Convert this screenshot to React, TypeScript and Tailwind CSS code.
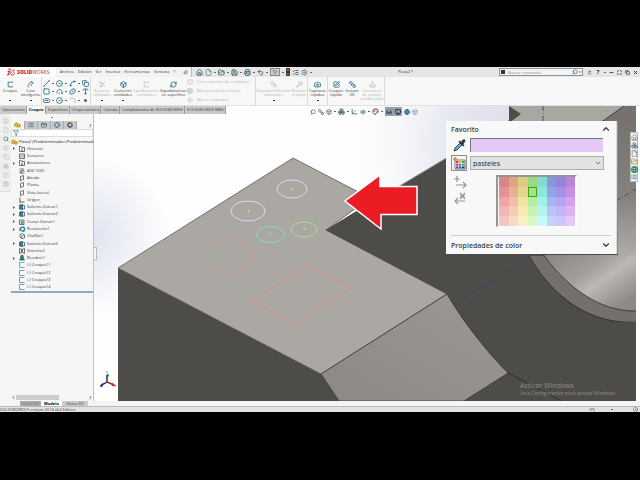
import React, { useState } from 'react';
import {
  Home, File, FolderOpen, Save, Printer, Undo2, MousePointer2, ListChecks, Settings, Pin, Search, User,
  Square, Spline, Grid3x3, CircleDot, Type, Scissors, RefreshCw, Copy, Wrench, Camera,
  SquarePen, Boxes, Box, Eye, ChevronDown, ChevronUp, ChevronLeft, ChevronRight, Filter, Crosshair, List,
  SquareStack, Glasses, Ruler, FlipHorizontal, Move, Minus, Copy as Restore, X, Maximize, Monitor, Axis3d,
  FolderClosed, Globe, Palette, Cone,
} from 'lucide-react';

type IconType = React.ComponentType<{ size?: number; strokeWidth?: number; className?: string }>;

interface ToolProps {
  icon: IconType;
  lines: string[];
  className: string;
  disabled?: boolean;
  menu?: boolean;
}

const MENUS = ['Archivo', 'Edición', 'Ver', 'Insertar', 'Herramientas', 'Ventana', '?'];
const QUICK: IconType[] = [FolderOpen, Save, Printer, Undo2];
const TABS = ['Operaciones', 'Croquis', 'Superficies', 'Chapa metálica', 'Calcular', 'Complementos de SOLIDWORKS', 'SOLIDWORKS MBD'];

const TREE: { label: string; kind: string; arrow?: boolean }[] = [
  { label: 'Historial', kind: 'folder', arrow: true },
  { label: 'Sensores', kind: 'sensor' },
  { label: 'Anotaciones', kind: 'folder', arrow: true },
  { label: 'AISI 1020', kind: 'material' },
  { label: 'Alzado', kind: 'plane' },
  { label: 'Planta', kind: 'plane' },
  { label: 'Vista lateral', kind: 'plane' },
  { label: 'Origen', kind: 'origin' },
  { label: 'Saliente-Extruir1', kind: 'boss', arrow: true },
  { label: 'Saliente-Extruir2', kind: 'boss', arrow: true },
  { label: 'Cortar-Extruir1', kind: 'cut', arrow: true },
  { label: 'Revolución1', kind: 'revolve', arrow: true },
  { label: 'Chaflán1', kind: 'chamfer' },
  { label: 'Saliente-Extruir5', kind: 'boss', arrow: true },
  { label: 'Simetría2', kind: 'mirror' },
  { label: 'Recubrir1', kind: 'loft', arrow: true },
  { label: '(-) Croquis11', kind: 'sketch' },
  { label: '(-) Croquis12', kind: 'sketch' },
  { label: '(-) Croquis13', kind: 'sketch' },
  { label: '(-) Croquis14', kind: 'sketch' },
];

const PASTELS = [
  '#dc8585', '#dfa486', '#dccb83', '#9bd981', '#80dcd2', '#8797dc', '#9585dc', '#bf83dc',
  '#e39391', '#e7b193', '#e6d58e', '#a8df8c', '#8fe5dc', '#93a4e4', '#a392e2', '#c98fe4',
  '#efa5a3', '#f1bea5', '#f0e2a0', '#b8ec9e', '#a0f0e8', '#a5b5f1', '#b5a5f1', '#d6a2f0',
  '#f4b5b5', '#f5cbb6', '#f5ebb2', '#c7f3b1', '#b2f5ee', '#b6c4f7', '#c4b6f6', '#deb3f6',
  '#f8c5c6', '#f9d8c7', '#f9f1c4', '#d5f8c4', '#c4f9f4', '#c5d1fb', '#d0c5fa', '#e6c5fa',
];

const Logo = () => (
  <div className="flex h-full w-14 shrink-0 items-center gap-px bg-white pl-1.5 text-[#c9252f]">
    <svg viewBox="0 0 24 22" className="h-2 w-2.5" fill="none" stroke="currentColor" strokeWidth="2.6" strokeLinecap="round">
      <path d="M5 3c5-2 9 0 6 3-2 2-4 3-7 4M3 19c7-1 11-6 8-8-2-1-5-1-7-1M3 19l4-8" />
      <path d="M22 6c-4-1-7 1-5 4 2 2 5 3 4 6-1 3-4 4-8 3" />
    </svg>
    <span className="text-[5px] leading-none font-extrabold">SOLID<span className="font-medium">WORKS</span></span>
  </div>
);

const Caret = () => <span className="h-px w-0.5 shrink-0 bg-[#666]" />;
const Sep = () => <span className="h-full w-px shrink-0 bg-[#dadada]" />;

const TitleBar = () => (
  <header className="flex h-2.5 shrink-0 items-center bg-[#e6e6e6] text-[4px] leading-none text-[#333]">
    <Logo />
    <nav className="flex h-full w-[136px] shrink-0 items-center gap-1 border-r border-[#bbb] bg-[#f2f2f2] pl-1">
      {MENUS.map(m => <button key={m}>{m}</button>)}
      <Pin size={5} strokeWidth={3} className="mr-[3px] ml-auto rotate-45 text-[#2d7182]" />
    </nav>
    <div className="flex shrink-0 items-center gap-0.5 pl-1 text-[#41626d]">
      <Home size={7} strokeWidth={3} />
      <File size={7} strokeWidth={2} />
      <Caret />
      {QUICK.map((Icon, i) => (
        <React.Fragment key={i}>
          <Icon size={7} strokeWidth={3} />
          <Caret />
        </React.Fragment>
      ))}
      <span className="flex border border-[#888] bg-[#cfcfcf] px-px"><MousePointer2 size={6} strokeWidth={2} /></span>
      <Caret />
      <svg viewBox="0 0 6 12" className="h-2 w-1"><rect width="6" height="12" rx="1" fill="#333" /><circle cx="3" cy="3" r="2" fill="#e33" /><circle cx="3" cy="9" r="2" fill="#2a8a3a" /></svg>
      <ListChecks size={7} strokeWidth={3} />
      <Settings size={7} strokeWidth={2} />
      <Caret />
    </div>
    <span className="flex-1 text-right"><span className="inline-block w-[101px] text-left">Pieza2 *</span></span>
    <label className="flex h-2 w-[84px] shrink-0 items-center border border-[#8b969c] bg-[#f4f4f4]">
      <span className="m-px h-1 w-1 bg-[#333]" />
      <input type="search" aria-label="Buscar comandos" placeholder="Buscar comandos" className="h-full w-0 flex-1 bg-transparent px-0.5 text-[4px] leading-none outline-none placeholder:text-[#888]" />
      <Search size={6} strokeWidth={3} className="-scale-x-100 text-[#347488]" />
      <ChevronDown size={4} strokeWidth={4} />
    </label>
    <div className="flex shrink-0 items-center gap-[3px] pr-0.5 pl-1 text-[#333]">
      <User size={5} strokeWidth={2} />
      <button className="w-1.5 text-[6px] leading-none font-bold">?</button>
      <Caret />
      <button aria-label="Minimizar"><Minus size={5} strokeWidth={4} /></button>
      <button aria-label="Ajustar"><Maximize size={5} strokeWidth={3} /></button>
      <button aria-label="Restaurar"><Restore size={5} strokeWidth={3} /></button>
      <button aria-label="Cerrar"><X size={5} strokeWidth={4} /></button>
    </div>
  </header>
);

const Tool: React.FC<ToolProps> = ({ icon: Icon, lines, className, disabled, menu }) => (
  <button disabled={disabled} className={`flex h-full shrink-0 flex-col items-center pt-1 text-[4px] leading-[4px] whitespace-nowrap ${disabled ? 'text-[#b4b4b4]' : 'text-[#3c3c3c]'} ${className}`}>
    <Icon size={7} strokeWidth={3} className={disabled ? 'text-[#c0c5c8]' : 'text-[#2f7184]'} />
    <span className="mt-px">{lines.map(l => <span key={l} className="block">{l}</span>)}</span>
    {menu && <span className="mt-auto mb-1 h-px w-0.5 bg-[#333]" />}
  </button>
);

const SketchIcon: IconType = ({ className }) => (
  <svg viewBox="0 0 24 24" className={`h-[7px] w-[7px] ${className}`} fill="none" stroke="currentColor" strokeWidth="3">
    <path d="M21 4H4v16h17" />
  </svg>
);

const DimensionIcon: IconType = ({ className }) => (
  <svg viewBox="0 0 24 24" className={`h-[7px] w-[7px] ${className}`} fill="none" stroke="currentColor" strokeWidth="3">
    <path d="M4 22C2 10 9 4 19 5M14 1l7 5-6 6M11 12l5 4" />
  </svg>
);

const LineIcon: IconType = () => (
  <svg viewBox="0 0 24 24" className="h-[7px] w-[7px]" fill="none" stroke="currentColor" strokeWidth="3"><path d="M3 21 21 3" /><circle cx="3" cy="21" r="1" /><circle cx="21" cy="3" r="1" /></svg>
);
const ArcIcon: IconType = () => (
  <svg viewBox="0 0 24 24" className="h-[7px] w-[7px]" fill="none" stroke="currentColor" strokeWidth="3"><path d="M3 18C2 2 20 2 21 15" /><circle cx="21" cy="18" r="2" /><path d="M9 18h5" /></svg>
);
const SlotIcon: IconType = () => (
  <svg viewBox="0 0 24 24" className="h-[7px] w-[7px]" fill="none" stroke="currentColor" strokeWidth="3"><rect x="1" y="6" width="22" height="13" rx="6" /><path d="M7 12h10" /></svg>
);
const EllipseIcon: IconType = () => (
  <svg viewBox="0 0 24 24" className="h-[7px] w-[7px]" fill="none" stroke="currentColor" strokeWidth="3"><ellipse cx="12" cy="12" rx="11" ry="7" transform="rotate(-40 12 12)" /><path d="M9 14l6-5" /></svg>
);
const FilletIcon: IconType = () => (
  <svg viewBox="0 0 24 24" className="h-[7px] w-[7px]" fill="none" stroke="#bbb" strokeWidth="3"><path d="M2 4h10q9 0 9 9v9" /></svg>
);
const PointIcon: IconType = () => (
  <svg viewBox="0 0 24 24" className="h-[7px] w-[7px]" fill="#333"><rect x="8" y="8" width="8" height="8" /></svg>
);

const ENTITIES: IconType[] = [LineIcon, CircleDot, Spline, Copy, Square, ArcIcon, EllipseIcon, Type, SlotIcon, CircleDot, FilletIcon, PointIcon];

const Ribbon = () => (
  <section className="flex h-[29px] shrink-0 overflow-hidden border-b border-[#e2e2e2] bg-[#f7f7f7]">
    <Tool icon={SketchIcon} lines={['Croquis']} className="w-5" menu />
    <Tool icon={DimensionIcon} lines={['Cota', 'inteligente']} className="w-[21px]" menu />
    <Sep />
    <div className="grid w-12 shrink-0 grid-cols-[13px_13px_13px_9px] items-center pt-0.5 pl-px text-[#2f7184]">
      {ENTITIES.map((Icon, i) => (
        <span key={i} className="flex items-center gap-0.5">
          <Icon size={7} strokeWidth={3} />
          {i % 4 < 3 && <Caret />}
        </span>
      ))}
    </div>
    <Sep />
    <Tool icon={Scissors} lines={['Recortar', 'entidades']} className="w-[22px]" disabled menu />
    <Tool icon={Box} lines={['Convertir', 'entidades']} className="w-5" menu />
    <Tool icon={SketchIcon} lines={['Equidistanciar', 'entidades']} className="w-[27px]" disabled />
    <Tool icon={RefreshCw} lines={['Equidistanciar', 'en superficie']} className="w-[27px]" />
    <div className="flex w-[68px] shrink-0 flex-col justify-around pr-px text-[4px] leading-none whitespace-nowrap text-[#b4b4b4]">
      <span className="flex items-center gap-1"><FlipHorizontal size={6} />Crear simetría de entidades</span>
      <span className="flex items-center gap-1"><Grid3x3 size={6} />Matriz lineal de croquis<span className="ml-auto"><Caret /></span></span>
      <span className="flex items-center gap-1"><Move size={6} />Mover entidades<span className="ml-auto"><Caret /></span></span>
    </div>
    <Sep />
    <Tool icon={Ruler} lines={['Visualizar/Eliminar', 'relaciones']} className="w-[35px]" disabled menu />
    <Tool icon={Wrench} lines={['Reparar', 'croquis']} className="w-4" disabled />
    <Sep />
    <Tool icon={Camera} lines={['Capturas', 'rápidas']} className="w-[19px]" menu />
    <Sep />
    <Tool icon={SquarePen} lines={['Croquis', 'rápido']} className="w-4" />
    <Tool icon={SquareStack} lines={['Instant', '2D']} className="w-4" />
    <Tool icon={Cone} lines={['Contornos', 'de croquis', 'sombreados']} className="w-6" disabled />
    <Sep />
  </section>
);

const TreeIcon: React.FC<{ kind: string }> = ({ kind }) => (
  <svg viewBox="0 0 12 12" className="h-1.5 w-1.5 shrink-0" fill="none" stroke="#4b5358" strokeWidth="1.6">
    {kind === 'folder' && <><path d="M1 1h4l1 2h5v8H1z" /><path d="M4 6h4M4 9h4" stroke="#3b8196" /></>}
    {kind === 'sensor' && <><path d="M1 2h10v9H1z" /><path d="M4 5v4M8 4v5" stroke="#a44" /></>}
    {kind === 'material' && <path d="M1 2h7M1 6h10M1 10h10M8 1v5M4 6v5" />}
    {kind === 'plane' && <path d="M3 3l6-2v8l-6 2z" />}
    {kind === 'origin' && <><path d="M2 1v9h9" stroke="#444" /><path d="M1 10h3" stroke="#a33" /></>}
    {kind === 'boss' && <><path d="M1 2l6-1v10l-6-1z" fill="#2f7f96" stroke="#2b6475" /><path d="M8 3h3v7H8" /></>}
    {kind === 'cut' && <><path d="M1 2h9v9H1z" /><path d="M4 5h4v4H4z" fill="#8fae9f" stroke="#5c8a78" /></>}
    {kind === 'revolve' && <path d="M2 10c-1-9 9-10 9-4s-5 5-6 2" stroke="#2a87a5" strokeWidth="3" />}
    {kind === 'chamfer' && <><path d="M2 3l5-2 4 3v6l-6 1-3-3z" /><path d="M5 11V6l6-2" stroke="#3a8c79" /></>}
    {kind === 'mirror' && <><path d="M1 1v10l4-2V3zM11 1v10L7 9V3z" /><path d="M6 0v12" stroke="#a55" strokeWidth="1" /></>}
    {kind === 'loft' && <path d="M4 1h4l1 6 2 3H1l2-3z" fill="#38788a" stroke="#2b5966" />}
    {kind === 'sketch' && <path d="M11 1H1v10h10" stroke="#5d8cab" />}
  </svg>
);

const PartIcon = () => (
  <svg viewBox="0 0 14 12" className="h-1.5 w-[7px] shrink-0" fill="#e2b83f" stroke="#9b7419" strokeWidth="1">
    <path d="M1 4l4-3 4 3v4l-4 2-4-2z" /><path d="M7 6l3-2 3 2v3l-3 2-3-2z" />
  </svg>
);

const FeatureTree = () => (
  <aside className="flex w-[94px] shrink-0 bg-[#f6f6f6]">
    <div className="flex w-[11px] shrink-0 flex-col items-center gap-[3px] self-start border-b border-[#ddd] bg-[#efefef] pt-1 pb-1 text-[#bdbdbd]">
      <Save size={6} /><File size={6} />
      <Search size={6} strokeWidth={3} className="text-[#4c8a64]" />
      <Box size={6} /><Copy size={6} /><Boxes size={6} /><SquarePen size={6} /><Grid3x3 size={6} />
    </div>
    <div className="flex w-0 flex-1 flex-col border-r border-[#bfc4c9]">
      <div className="flex h-[7px] shrink-0 items-center justify-center"><span className="h-px w-0.5 bg-[#888]" /></div>
      <div className="flex h-2 shrink-0 items-center bg-[#c9c9c9] text-[#3e6a79]">
        <button aria-label="Árbol de operaciones" className="flex h-full w-[13px] items-center justify-center bg-[#f6f6f6]"><PartIcon /></button>
        {[List, FolderClosed, Crosshair].map((Icon, i) => (
          <button key={i} className="flex h-full w-[13px] items-center justify-center border-l border-[#aaa]"><Icon size={6} strokeWidth={3} /></button>
        ))}
        <button aria-label="Apariencias" className="flex h-full w-[14px] items-center justify-center border-x border-[#aaa]">
          <svg viewBox="0 0 12 12" className="h-1.5 w-1.5"><path d="M6 6V0a6 6 0 0 1 5 9z" fill="#3d9e4b" /><path d="M6 6l5 3a6 6 0 0 1-10 0z" fill="#2f5ea8" /><path d="M6 6L1 9a6 6 0 0 1 5-9z" fill="#c93b2c" /><circle cx="6" cy="6" r="2" fill="#eee" /></svg>
        </button>
        <span className="flex h-full flex-1 items-center justify-end bg-[#f6f6f6]"><ChevronRight size={5} strokeWidth={4} /></span>
      </div>
      <div className="flex h-2 shrink-0 items-center border border-[#ddd] bg-white px-px"><Filter size={6} strokeWidth={3} className="text-[#3b7c9a]" /></div>
      <ul className="grid h-[156px] shrink-0 auto-rows-fr border-b-2 border-[#8fa8c4] pt-px text-[4px] leading-none whitespace-nowrap text-[#333]">
        <li className="flex items-center gap-px"><PartIcon /><span className="font-['Liberation_Sans',sans-serif]">Pieza2 (Predeterminado&lt;&lt;Predeterminad</span></li>
        {TREE.map(item => (
          <li key={item.label} className="flex items-center gap-0.5">
            <span className="flex w-1.5 shrink-0 justify-center">
              {item.arrow && <svg viewBox="0 0 4 6" className="h-[3px] w-0.5" fill="#555"><path d="M0 0l4 3-4 3z" /></svg>}
            </span>
            <TreeIcon kind={item.kind} />
            <span>{item.label}</span>
          </li>
        ))}
      </ul>
      <div className="mt-auto mb-px flex h-1.5 items-center text-[#555]">
        <ChevronLeft size={5} strokeWidth={4} />
        <span className="h-[5px] w-[43px] bg-[#cdcdcd]" />
        <ChevronRight size={5} strokeWidth={4} className="ml-auto" />
      </div>
    </div>
  </aside>
);

// Part geometry, drawn in window coordinates
const Scene = () => (
  <svg viewBox="0 106 636 295" preserveAspectRatio="xMaxYMin slice" className="absolute inset-0 h-full w-full">
    <defs>
      <radialGradient id="skyLeft" gradientUnits="userSpaceOnUse" cx="90" cy="235" r="80">
        <stop offset="0" stopColor="#dfe3ef" /><stop offset="1" stopColor="#dfe3ef" stopOpacity="0" />
      </radialGradient>
      <radialGradient id="skyRight" gradientUnits="userSpaceOnUse" cx="520" cy="140" r="190">
        <stop offset="0" stopColor="#d9ddea" /><stop offset=".4" stopColor="#e6e9f2" /><stop offset="1" stopColor="#fff" stopOpacity="0" />
      </radialGradient>
      <linearGradient id="side" x1="0" y1="1" x2="1" y2="0">
        <stop offset="0" stopColor="#8c8883" /><stop offset="1" stopColor="#9c9994" />
      </linearGradient>
      <linearGradient id="bore" gradientUnits="userSpaceOnUse" x1="560" y1="240" x2="620" y2="325">
        <stop offset="0" stopColor="#86827e" /><stop offset=".4" stopColor="#a39f9b" /><stop offset=".55" stopColor="#bcb8b4" /><stop offset=".85" stopColor="#8e8a86" /><stop offset="1" stopColor="#8e8a86" />
      </linearGradient>
      <linearGradient id="wall" gradientUnits="userSpaceOnUse" x1="0" y1="106" x2="0" y2="256">
        <stop offset="0" stopColor="#74716d" /><stop offset=".6" stopColor="#85827e" /><stop offset="1" stopColor="#b0aca8" />
      </linearGradient>
    </defs>
    <rect y="106" width="636" height="295" fill="#fefefe" />
    <rect y="106" width="636" height="295" fill="url(#skyLeft)" />
    <rect y="106" width="636" height="295" fill="url(#skyRight)" />
    <path d="M326 230L510 120 636 106V401H321z" fill="#4e4c49" />
    <path d="M326 230L510 120" stroke="#8b8986" />
    <path d="M509 106H636V122H509z" fill="#aaa7a2" />
    <path d="M509 106l12 8-12 9z" fill="#4e4c49" />
    <path d="M624 106L600 123h18V257H636V106z" fill="url(#wall)" />
    <path d="M528 254C546 286 580 323 636 323V256H528z" fill="#74716d" />
    <path d="M543 254C564 284 598 312 636 311V255H543z" fill="url(#bore)" />
    <path d="M528 254C546 286 580 325 636 322M543 254C564 284 598 312 636 311M624 106L600 123" fill="none" stroke="#2f2d2b" strokeWidth=".8" />
    <path d="M118 268L321 374 339 401H118z" fill="#4e4c49" />
    <path d="M118 268L293 158 370 198 326 230 447 294 321 374z" fill="#aba8a3" stroke="#4b4947" strokeWidth=".7" />
    <path d="M321 374L447 294C460 317 484 349 508 373L464 401H339z" fill="url(#side)" stroke="#33312f" strokeWidth=".7" />
    <path d="M508 373L562 401" stroke="#2c2a28" strokeWidth=".8" />
    <path d="M355 212L326 230 370 253V205z" fill="#4e4c49" />
    <g stroke="#3c3c86" strokeWidth=".9" strokeDasharray="5 2 1 2"><path d="M543 106v16M464 298L530 256M616 201L636 189" /></g>
    <g fill="none" strokeWidth="1">
      <ellipse cx="292" cy="189" rx="15" ry="9" stroke="#e2d3ec" />
      <ellipse cx="248" cy="211" rx="17" ry="10" stroke="#e2d3ec" />
      <ellipse cx="270.5" cy="234.5" rx="14" ry="8" stroke="#86dcc2" />
      <ellipse cx="304" cy="229.5" rx="13" ry="7.5" stroke="#a6dd8c" />
      <path d="M291 189h3M292.5 187.5v3M247 211h3M248.5 209.5v3" stroke="#d9cfa4" strokeWidth=".7" />
      <path d="M269 234h3M270.5 232.5v3" stroke="#86dcc2" strokeWidth=".7" />
      <path d="M303 229h3M304.5 227.5v3" stroke="#b8dd8c" strokeWidth=".7" />
      <ellipse cx="227" cy="256" rx="28" ry="16.5" stroke="#c59a97" strokeWidth="1.2" />
      <path d="M307 266L352 288 295 323 252 301z" stroke="#c99794" strokeWidth="1.2" />
      <path d="M304 266l3-3 3 3M349 288l4-1M252 298l-1 4M292 322l3 2" stroke="#cf9a98" strokeWidth=".8" />
    </g>
    <path d="M345 201L380 175V186.5H417V214.5H381V229z" fill="#ec1c24" stroke="#fff" strokeWidth="1.5" />
    <g strokeWidth="1.4" fill="none">
      <path d="M107 382v-6" stroke="#222" /><path d="M107 382l-5 3" stroke="#1d1d8f" /><path d="M107 382l7 3" stroke="#b32525" />
      <circle cx="107.5" cy="375.5" r="1" fill="#1c7a30" stroke="#1c7a30" strokeWidth=".8" />
      <path d="M107 373l-1-2M107 373l1-2" stroke="#5bbb62" strokeWidth=".6" />
      <path d="M103 383l-1 4-2-1z" fill="#1d1d8f" stroke="#1d1d8f" strokeWidth=".5" /><path d="M112 383l4 3-4 0z" fill="#c33" stroke="#c33" strokeWidth=".5" />
    </g>
  </svg>
);

const HeadsUp = () => (
  <div className="absolute top-px left-[310px] flex items-center gap-0.5 text-[#4c7482]">
    <Search size={6} strokeWidth={3} className="-scale-x-100" />
    <SquareStack size={6} strokeWidth={3} />
    <Box size={6} strokeWidth={3} />
    <Caret />
    <Boxes size={7} strokeWidth={3} />
    <Caret />
    <Axis3d size={7} strokeWidth={3} />
    <Eye size={6} strokeWidth={3} />
    <Caret />
    <Palette size={7} strokeWidth={3} className="text-[#8a5f4c]" />
    <Caret />
    <span className="flex h-[9px] items-center gap-[3px] bg-[#9a9fa3] px-px text-[#1f3e5b]">
      <Glasses size={6} strokeWidth={3} />
      <Monitor size={6} strokeWidth={4} />
    </span>
    <Globe size={6} strokeWidth={4} className="text-[#2b6c96]" />
    <Box size={6} strokeWidth={2} />
  </div>
);

const ColorPanel = () => {
  const [palette, setPalette] = useState('pasteles');
  const [picked, setPicked] = useState(11);

  return (
    <section className="absolute top-[15px] right-[19px] w-[171px] border-r border-[#dcdcdc] bg-[#f8f8f8] px-[5px] text-[#404040] shadow-[1px_0_0_#8c8a88]">
      <header className="flex h-4 items-center justify-between text-[7px] leading-none font-semibold">
        <h2>Favorito</h2>
        <button aria-label="Contraer"><ChevronUp size={10} strokeWidth={3} /></button>
      </header>
      <div className="flex items-center gap-[3px] pr-2">
        <button aria-label="Cuentagotas" className="h-4 w-4 shrink-0">
          <svg viewBox="0 0 16 16" className="h-4 w-4">
            <path d="M3 14l1-3 5-5 2 2-5 5z" fill="#6ba6cb" stroke="#35495a" strokeWidth="1" />
            <path d="M8 4l5 5" stroke="#1e2a35" strokeWidth="1.6" />
            <path d="M10.5 5l1.5-2q2-1 2 1l-2 3z" fill="#27333f" stroke="#27333f" strokeWidth="1" />
          </svg>
        </button>
        <div className="h-[14px] flex-1 border-t border-l border-[#777] bg-[#e4c8f7]" />
      </div>
      <div className="mt-0.5 flex items-center gap-[3px] pr-[7px]">
        <button aria-label="Muestras" className="h-4 w-4 shrink-0 border border-[#8d8d8d] bg-[#f4f4f4]">
          <svg viewBox="0 0 14 14" className="h-[14px] w-[14px]">
            <path d="M3 4h10v9H3z" fill="#fff" stroke="#555" strokeWidth=".8" />
            <path d="M4 5h2.5v2H4z" fill="#d33" /><path d="M7 5h2.5v2H7z" fill="#e8b92c" /><path d="M10 5h2.5v2H10z" fill="#3a3" />
            <path d="M4 7.7h2.5v2H4z" fill="#c33a7a" /><path d="M7 7.7h2.5v2H7z" fill="#2b9a50" /><path d="M10 7.7h2.5v2H10z" fill="#2aa" />
            <path d="M4 10.4h2.5v2H4z" fill="#7a3aa8" /><path d="M7 10.4h2.5v2H7z" fill="#2b58c0" /><path d="M10 10.4h2.5v2H10z" fill="#238" />
            <path d="M3 1v4M1 3h4" stroke="#d98a3a" strokeWidth="1.5" />
          </svg>
        </button>
        <div className="relative flex flex-1">
          <select aria-label="Paleta" value={palette} onChange={e => setPalette(e.target.value)} className="h-[14px] w-full appearance-none border border-[#acacac] bg-[#e2e2e2] px-0.5 text-[7px] leading-none text-[#222] outline-none">
            <option value="pasteles">pasteles</option>
            <option value="estándar">estándar</option>
          </select>
          <ChevronDown size={8} strokeWidth={2} className="pointer-events-none absolute top-[3px] right-0.5" />
        </div>
      </div>
      <div className="mt-1 flex gap-[29px] pl-0.5">
        <svg viewBox="0 0 14 32" className="h-8 w-[14px] shrink-0" fill="none" stroke="#969696" strokeWidth="1.2">
          <path d="M4 1v6M1 4h6M3 10h10M10 7l3 3-3 3" />
          <path d="M7 18l5 6M12 18l-5 6M7 21h5M2 26h10M5 23l-3 3 3 3" />
        </svg>
        <div className="grid h-[52px] w-[81px] grid-cols-8 grid-rows-5 border-t-2 border-r-2 border-b border-l-2 border-t-[#969696] border-r-white border-b-white border-l-[#969696] pl-px">
          {PASTELS.map((color, i) => (
            <button key={i} aria-label={color} onClick={() => setPicked(i)} style={{ backgroundColor: color }} className={i === picked ? 'relative z-10 border border-[#35a810]' : ''} />
          ))}
        </div>
      </div>
      <hr className="mt-2 border-[#cfcfcf]" />
      <header className="flex h-[18px] items-center justify-between text-[7px] leading-none font-semibold">
        <h2>Propiedades de color</h2>
        <button aria-label="Expandir"><ChevronDown size={10} strokeWidth={3} /></button>
      </header>
    </section>
  );
};

const TaskPane = () => (
  <div className="absolute top-[26px] -right-0.5 flex w-2 flex-col items-center gap-px border border-[#bbb] bg-[#f1f1f1] py-px text-[#5c6a72]">
    <Home size={7} strokeWidth={2} />
    <Boxes size={7} strokeWidth={2} />
    <File size={7} strokeWidth={2} />
    <FolderOpen size={7} strokeWidth={3} className="text-[#b9983b]" />
    <Globe size={7} strokeWidth={4} className="text-[#2e8a68]" />
    <List size={6} strokeWidth={3} className="text-[#36789c]" />
  </div>
);

const App = () => {
  const [tab, setTab] = useState('Croquis');

  return (
    <div className="flex min-h-screen flex-col bg-black pt-[67px] pb-[68px] font-['Open_Sans','Noto_Sans',sans-serif]">
      <TitleBar />
      <Ribbon />
      <main className="flex flex-1 flex-col bg-white pr-1">
        <div className="relative flex flex-1 flex-col">
          <Scene />
          <HeadsUp />
          <div className="relative flex h-2 shrink-0 self-start font-['Liberation_Sans',sans-serif] text-[4px] leading-none whitespace-nowrap text-[#444]">
            {TABS.map(t => (
              <button key={t} onClick={() => setTab(t)} className={`border-r border-[#999] pr-px pl-0.5 ${t === tab ? 'bg-[#f7f7f7] font-bold text-black' : 'bg-[#cacaca]'}`}>{t}</button>
            ))}
          </div>
          <div className="relative flex flex-1">
            <FeatureTree />
            <button aria-label="Ocultar panel" className="mt-[133px] h-[13px] w-[3px] border border-l-0 border-[#b5bac0] bg-[#f6f6f6]" />
          </div>
          <div className="absolute top-0.5 right-0 flex gap-1 text-[#8e8b87]">
            <Minus size={5} /><Minus size={5} /><Maximize size={5} /><X size={5} />
          </div>
          <ColorPanel />
          <TaskPane />
          <div className="absolute right-5 bottom-1 w-24 whitespace-nowrap text-[#8e8c8a]">
            <p className="text-[7px] leading-[9px]">Activar Windows</p>
            <p className="text-[5px] leading-[7px]">Ve a Configuración para activar Windows.</p>
          </div>
        </div>
      </main>
      <div className="flex h-[5px] shrink-0 bg-[#f5f5f5] pl-5 text-[4px] leading-none whitespace-nowrap text-[#444]">
        <button className="w-[21px] bg-[#ababab] text-[#777]">Vistas 3D</button>
        <button className="w-[21px] bg-white font-bold text-black">Modelo</button>
        <button className="w-[26px] bg-[#cacaca]">Vistas 3D</button>
      </div>
      <footer className="flex h-1.5 shrink-0 items-center border-t border-[#bbb] bg-[#e3e3e3] text-[4px] leading-none text-[#444]">
        <span>SOLIDWORKS Premium 2018 x64 Edition</span>
        <span className="mr-4 ml-auto">IPS</span>
        <Caret />
        <CircleDot size={5} className="mr-0.5 ml-5" />
      </footer>
    </div>
  );
};

export default App;
